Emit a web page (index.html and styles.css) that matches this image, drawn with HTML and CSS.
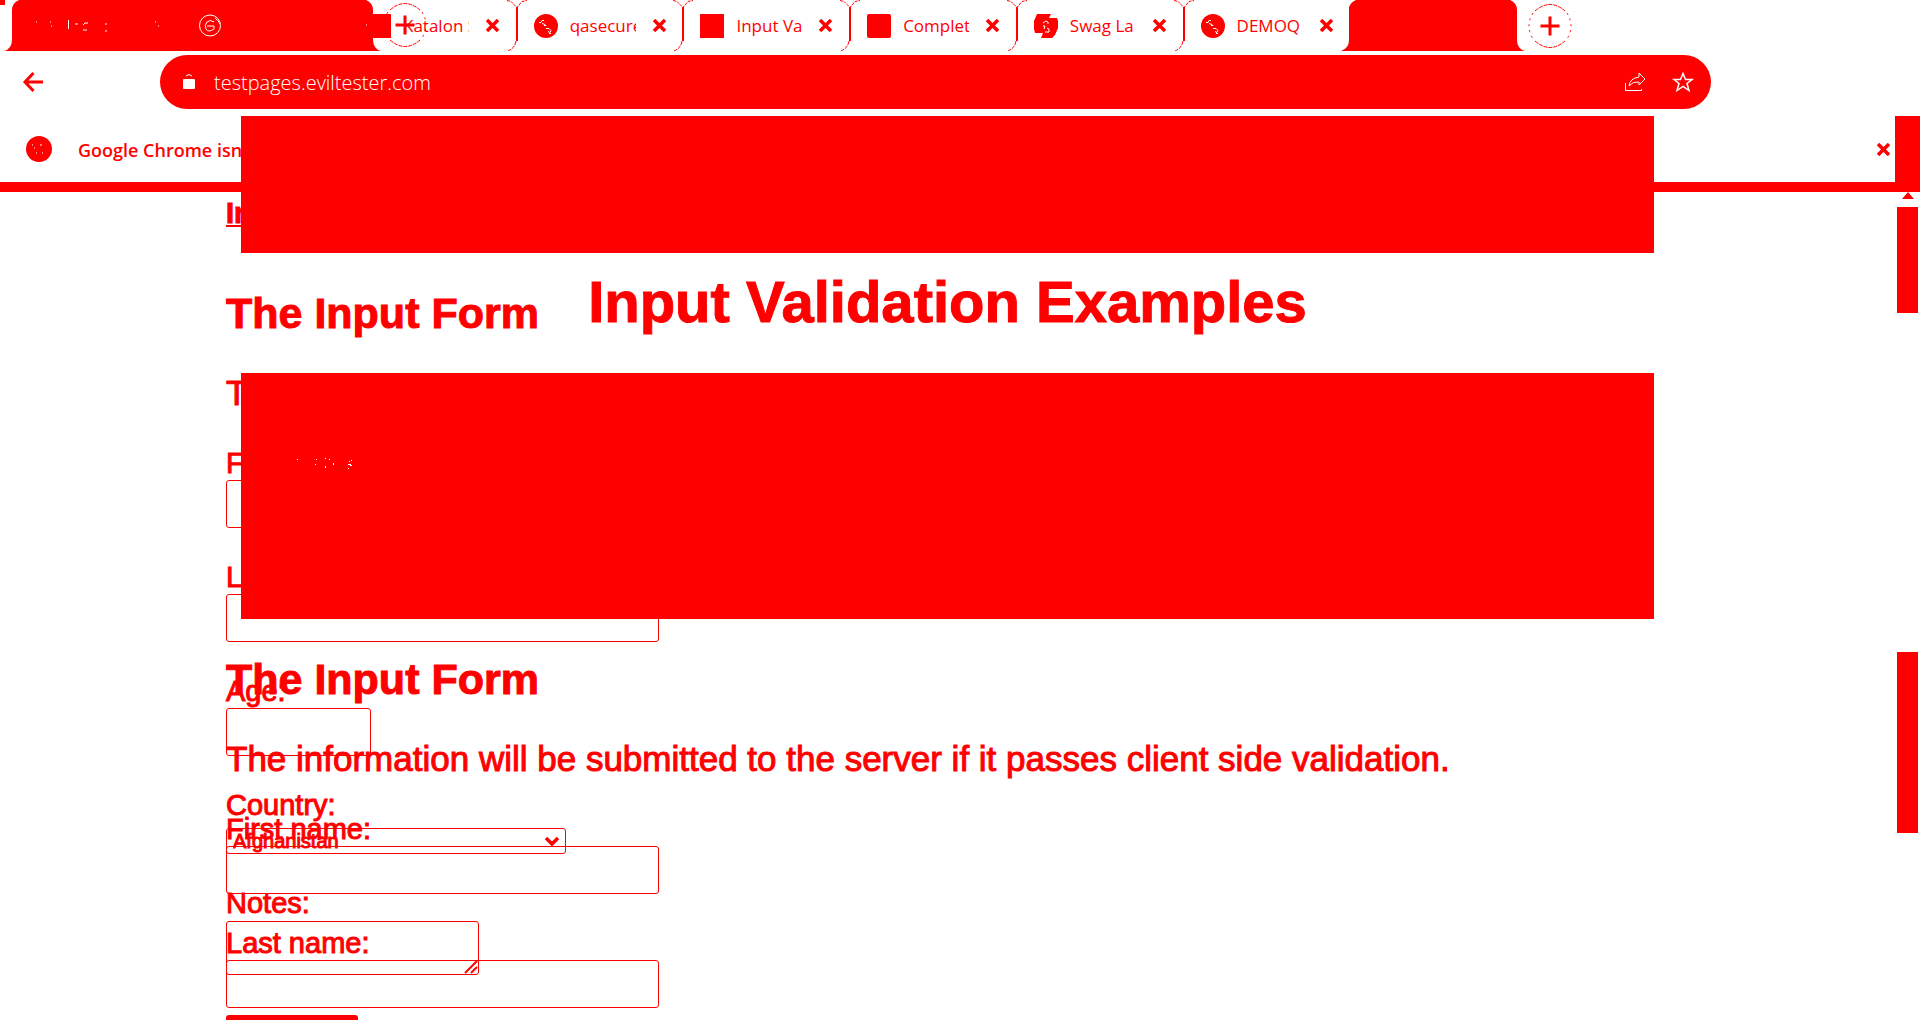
FILE: index.html
```html
<!DOCTYPE html>
<html lang="en">
<head>
<meta charset="utf-8">
<title>Input Validation Examples</title>
<link rel="stylesheet" href="styles.css">
</head>
<body>
<svg class="defs" aria-hidden="true">
  <symbol id="close" viewBox="0 0 13 13"><path d="M1 1l11 11M12 1L1 12" fill="none" stroke="currentColor" stroke-width="3.500"/></symbol>
  <symbol id="globe" viewBox="0 0 24 24"><circle cx="12" cy="12" r="12" fill="currentColor"/><path d="M5 8.500h2l1-2h2M8 9.500l3 1 1 1h-2M12 14.500h3l2 2-1 2-2-1M15 19.500h2" fill="none" stroke="#fff" stroke-width="1"/></symbol>
  <symbol id="edge" viewBox="0 0 22 51"><path d="M1 0.500l4 1 6 6 5-6 5-1" fill="none" stroke="currentColor" stroke-dasharray="3 1"/><path d="M11 7v34" fill="none" stroke="currentColor" stroke-width="2"/><path d="M10 41q-1 7-8 10" fill="none" stroke="currentColor" stroke-dasharray="4 1"/></symbol>
  <symbol id="plus" viewBox="0 0 44 44"><path d="M7 7q15-13 30 0M7 37q15 13 30 0" fill="none" stroke="currentColor" stroke-dasharray="4 1"/><path d="M5 9q-8 13 0 26M39 9q8 13 0 26" fill="none" stroke="currentColor" stroke-dasharray="2 4"/><path d="M12.500 22h19M22 12.500v19" fill="none" stroke="currentColor" stroke-width="3"/></symbol>
</svg>

<header class="chrome">
  <div class="strip">
    <svg class="active-tab" viewBox="0 0 381 51" aria-hidden="true">
      <path d="M0 0h5v5H0zM4 51q8-2 8-12V10q0-7 7-10h347q7 3 7 10v29q0 10 8 12z" fill="currentColor"/>
      <path d="M36 22h1M50 22h1M51 26h1M68.500 20v9M75 24h3M83 25l2-2h3M83 30h4M106 23v2M106 30v2M155 22h1M158 26h1M366 25h4M367 33h5M368 21h3" fill="none" stroke="#fff"/>
      <circle cx="210" cy="25.500" r="10.500" fill="none" stroke="#fff"/>
      <path d="M214 22q-4-3-7 0t-1 7 8 0v-3h-7M215 18q4 3 5 6" fill="none" stroke="#fff"/>
    </svg>
    <nav class="tabs">
      <div class="tab"><svg class="favicon" viewBox="0 0 24 24"><path d="M0 0h24v24H0z" fill="currentColor"/></svg><span class="tab-title">Katalon S</span><button class="close" aria-label="Close tab"><svg><use href="#close"/></svg></button></div>
      <div class="tab"><svg class="edge"><use href="#edge"/></svg><svg class="favicon"><use href="#globe"/></svg><span class="tab-title">qasecure</span><button class="close" aria-label="Close tab"><svg><use href="#close"/></svg></button></div>
      <div class="tab"><svg class="edge"><use href="#edge"/></svg><svg class="favicon" viewBox="0 0 24 24"><path d="M0 0h24v24H0z" fill="currentColor"/></svg><span class="tab-title">Input Va</span><button class="close" aria-label="Close tab"><svg><use href="#close"/></svg></button></div>
      <div class="tab"><svg class="edge"><use href="#edge"/></svg><svg class="favicon" viewBox="0 0 24 24"><rect width="24" height="24" rx="2" fill="currentColor"/></svg><span class="tab-title">Complet</span><button class="close" aria-label="Close tab"><svg><use href="#close"/></svg></button></div>
      <div class="tab"><svg class="edge"><use href="#edge"/></svg><svg class="favicon" viewBox="0 0 24 24"><path d="M3 0h14l-2 4h8l1 3v7l-3 7-3 3H7l2-5H1l-1-4V7z" fill="currentColor"/><path d="M9 9l3-2 2 1v2M9 12h2l-1 3M11 18h4v-3l-2-1" fill="none" stroke="#fff"/></svg><span class="tab-title">Swag La</span><button class="close" aria-label="Close tab"><svg><use href="#close"/></svg></button></div>
      <div class="tab"><svg class="edge"><use href="#edge"/></svg><svg class="favicon"><use href="#globe"/></svg><span class="tab-title">DEMOQ</span><button class="close" aria-label="Close tab"><svg><use href="#close"/></svg></button></div>
      <div class="tab"><svg class="filled-tab" viewBox="0 0 184 51" aria-hidden="true"><path d="M0 51q8-3 8-11V7q2-5 7-7h154q7 3 7 10v30q0 9 8 11z" fill="currentColor"/></svg></div>
    </nav>
    <button class="new-tab" aria-label="New tab"><svg><use href="#plus"/></svg></button>
    <button class="new-tab new-tab-left" aria-label="New tab"><svg><use href="#plus"/></svg></button>
  </div>

  <div class="toolbar">
    <button class="back" aria-label="Back"><svg viewBox="0 0 20 20"><path d="M20 10H2M10.500 1L2 10l8.500 9" fill="none" stroke="currentColor" stroke-width="3"/></svg></button>
    <div class="omnibox">
      <svg class="lock" viewBox="0 0 12 16"><rect y="5" width="12" height="10" rx="1" fill="currentColor"/><path d="M3 2q3-3 6 0" fill="none" stroke="currentColor"/></svg>
      <input class="url" aria-label="Address" value="testpages.eviltester.com">
      <button class="box-icon" aria-label="Share"><svg viewBox="0 0 22 20"><path d="M1.500 11v7.500h16V17" fill="none" stroke="currentColor"/><path d="M5 14q1-8 10-9V1l6 6-6 6v-3q-6-1-10 4z" fill="none" stroke="currentColor"/></svg></button>
      <button class="box-icon" aria-label="Bookmark"><svg viewBox="0 0 22 20"><path d="M11 1.500l2.500 6h6.500l-5 4 2 7-6-4-6 4 2-7-5-4h6.500z" fill="none" stroke="currentColor" stroke-width="1.500"/></svg></button>
    </div>
  </div>
</header>

<div class="stage">
  <section class="layer">
    <div class="infobar">
      <svg class="info-icon" viewBox="0 0 26 26"><circle cx="13" cy="13" r="13" fill="currentColor"/><path d="M6 9h1M8 12h1M14 9h2M10 17h1M16 17h1" stroke="#fff"/></svg>
      <span class="info-text">Google Chrome isn't</span>
      <button class="close" aria-label="Dismiss"><svg><use href="#close"/></svg></button>
    </div>
    <div class="content first-content">
      <a class="jump" href="#form">Input</a>
      <h2>The Input Form</h2>
      <p>The information will be submitted to the server if it passes client side validation.</p>
      <form id="form">
        <label for="first-a">First name:</label>
        <input class="field" id="first-a">
        <label for="last-a">Last name:</label>
        <input class="field" id="last-a">
        <label for="age">Age:</label>
        <input class="field age" id="age">
        <label for="country">Country:</label>
        <div class="stack country">
          <select id="country"><option>Afghanistan</option></select>
          <svg class="chevron" viewBox="0 0 14 10"><path d="M1 2l6 6 6-6" fill="none" stroke="currentColor" stroke-width="3.500"/></svg>
        </div>
        <label for="notes">Notes:</label>
        <div class="stack notes">
          <textarea id="notes"></textarea>
          <svg class="grip" viewBox="0 0 12 12"><path d="M0 12L12 0M6 12l6-6" fill="none" stroke="currentColor" stroke-width="2"/></svg>
        </div>
      </form>
    </div>
  </section>

  <section class="layer">
    <div class="panel panel-top"></div>
    <h1>Input Validation Examples</h1>
    <div class="panel panel-main">
      <svg class="specks" viewBox="0 0 60 14"><path d="M0 3.500h1M19 3.500h1M18 8.500h1M28 2.500h1M32 3.500h1M36.500 7v2M28.500 10v2M54 4.500h1M52 5.500h1M51 8.500h3M53 9.500h2M51 12.500h1" stroke="#fff" fill="none"/></svg>
    </div>
    <div class="content">
      <h2 class="second-heading">The Input Form</h2>
      <p>The information will be submitted to the server if it passes client side validation.</p>
      <form>
        <label for="first-b">First name:</label>
        <input class="field" id="first-b">
        <label for="last-b">Last name:</label>
        <input class="field" id="last-b">
        <button class="submit" aria-label="Submit"></button>
      </form>
    </div>
  </section>

  <aside class="scrollbar">
    <div class="scroll-block"></div>
    <svg class="scroll-arrow" viewBox="0 0 12 7"><path d="M6 0l6 7H0z" fill="currentColor"/></svg>
    <div class="thumb"></div>
    <div class="thumb thumb-low"></div>
  </aside>
</div>
</body>
</html>
```

FILE: styles.css
```css
:root { --red: #f00; }
* { box-sizing: border-box; }
body {
  margin: 0;
  height: 100vh;
  overflow: hidden;
  display: flex;
  flex-direction: column;
  background: #fff;
  color: var(--red);
  font-family: "Liberation Sans", Arial, sans-serif;
}
svg { display: block; overflow: visible; }
.defs { position: absolute; width: 0; height: 0; }
button { padding: 0; border: 0; background: none; color: inherit; }

/* Tab strip */
.strip { position: relative; display: grid; grid-template-columns: 1517px 44px; column-gap: 11px; height: 51px; }
.active-tab { grid-area: 1 / 1; width: 381px; height: 51px; }
.tabs { grid-area: 1 / 1; margin-left: 350px; display: grid; grid-template-columns: repeat(7, 1fr); }
.tab {
  position: relative;
  display: flex;
  align-items: center;
  padding-left: 17px;
  font: 500 17px/24px "Open Sans", sans-serif;
}
.edge { position: absolute; left: -11px; top: 0; width: 22px; height: 51px; }
.filled-tab { position: absolute; left: -9px; top: 0; width: 184px; height: 51px; }
.favicon { flex: none; width: 24px; height: 24px; }
.tab-title {
  flex: none;
  width: 66px;
  margin: 0 17px 0 12px;
  overflow: hidden;
  white-space: nowrap;
}
.close, .close svg { width: 13px; height: 13px; }
.new-tab { align-self: center; }
.new-tab svg { width: 44px; height: 44px; }
.new-tab-left { position: absolute; left: 383px; top: 3px; }

/* Toolbar */
.toolbar { display: flex; align-items: center; margin-top: 4px; padding: 0 209px 0 23px; }
.back { width: 137px; }
.back svg { width: 20px; height: 20px; }
.omnibox {
  flex: 1;
  display: flex;
  align-items: center;
  height: 54px;
  padding: 0 17px 0 23px;
  border-radius: 27px;
  background: var(--red);
  color: #fff;
}
.lock { width: 12px; height: 16px; }
.url {
  flex: 1;
  margin-left: 19px;
  padding: 2px 0 0;
  border: 0;
  background: none;
  color: inherit;
  font: 300 20px/28px "Open Sans", sans-serif;
}
.box-icon { margin-left: 26px; }
.box-icon svg { width: 22px; height: 20px; }

/* Two page layers share one cell, beside the scrollbar */
.stage {
  flex: 1;
  min-height: 0;
  display: grid;
  grid-template-columns: 1fr 25px;
  grid-template-rows: 1fr;
  padding-top: 7px;
}
.layer { grid-area: 1 / 1; min-width: 0; }
.infobar {
  display: flex;
  align-items: center;
  height: 76px;
  padding: 0 5px 0 26px;
  border-bottom: 10px solid var(--red);
}
.info-icon { width: 26px; height: 26px; }
.info-text {
  flex: 1;
  margin-left: 26px;
  padding-top: 2px;
  font: 600 18px/28px "Open Sans", sans-serif;
}
.content { padding: 0 226px; }
.first-content { padding-top: 4px; }
.jump { display: block; font-weight: bold; font-size: 29px; line-height: 34px; color: inherit; -webkit-text-stroke: 1px var(--red); }
h1 {
  margin: 16px 0 38px;
  font-size: 58px;
  line-height: 66px;
  text-align: center;
  -webkit-text-stroke: 1px var(--red);
}
h2 { margin: 58px 0 35px; font-size: 43px; line-height: 50px; -webkit-text-stroke: 1px var(--red); }
.second-heading { margin-top: 35px; }
p { margin: 0 0 33px; font-size: 35px; line-height: 40px; white-space: nowrap; -webkit-text-stroke: 1px var(--red); }
label { display: block; font-size: 29px; line-height: 34px; -webkit-text-stroke: 1px var(--red); }
.field, select, textarea {
  display: block;
  border: 1px solid var(--red);
  border-radius: 3px;
  background: none;
  color: inherit;
}
.field { width: 433px; height: 48px; margin-bottom: 32px; }
.age { width: 145px; }
.stack { display: grid; }
.stack > * { grid-area: 1 / 1; }
.country { width: 340px; margin: 6px 0 32px; }
select {
  height: 26px;
  padding: 0 6px;
  appearance: none;
  font: 20px/24px "Liberation Sans", Arial, sans-serif;
  -webkit-text-stroke: 1px var(--red);
}
.chevron { width: 14px; height: 10px; margin-right: 7px; place-self: center end; }
.notes { width: 253px; margin-top: 1px; }
textarea { height: 54px; resize: none; }
.grip { width: 12px; height: 12px; margin: 0 2px 2px 0; place-self: end; }
.panel { margin: 0 241px; background: var(--red); }
.panel-top { height: 137px; }
.panel-main { height: 246px; padding: 83px 56px; }
.specks { width: 60px; height: 14px; }
.submit { display: block; width: 132px; height: 40px; margin-top: -25px; border-radius: 3px; background: var(--red); }

/* Scrollbar */
.scrollbar { grid-area: 1 / 2; display: flex; flex-direction: column; align-items: center; }
.scroll-block { width: 25px; height: 76px; background: var(--red); }
.scroll-arrow { width: 12px; height: 7px; }
.thumb { width: 21px; height: 106px; margin-top: 8px; background: var(--red); }
.thumb-low { height: 181px; margin-top: 339px; }
```
